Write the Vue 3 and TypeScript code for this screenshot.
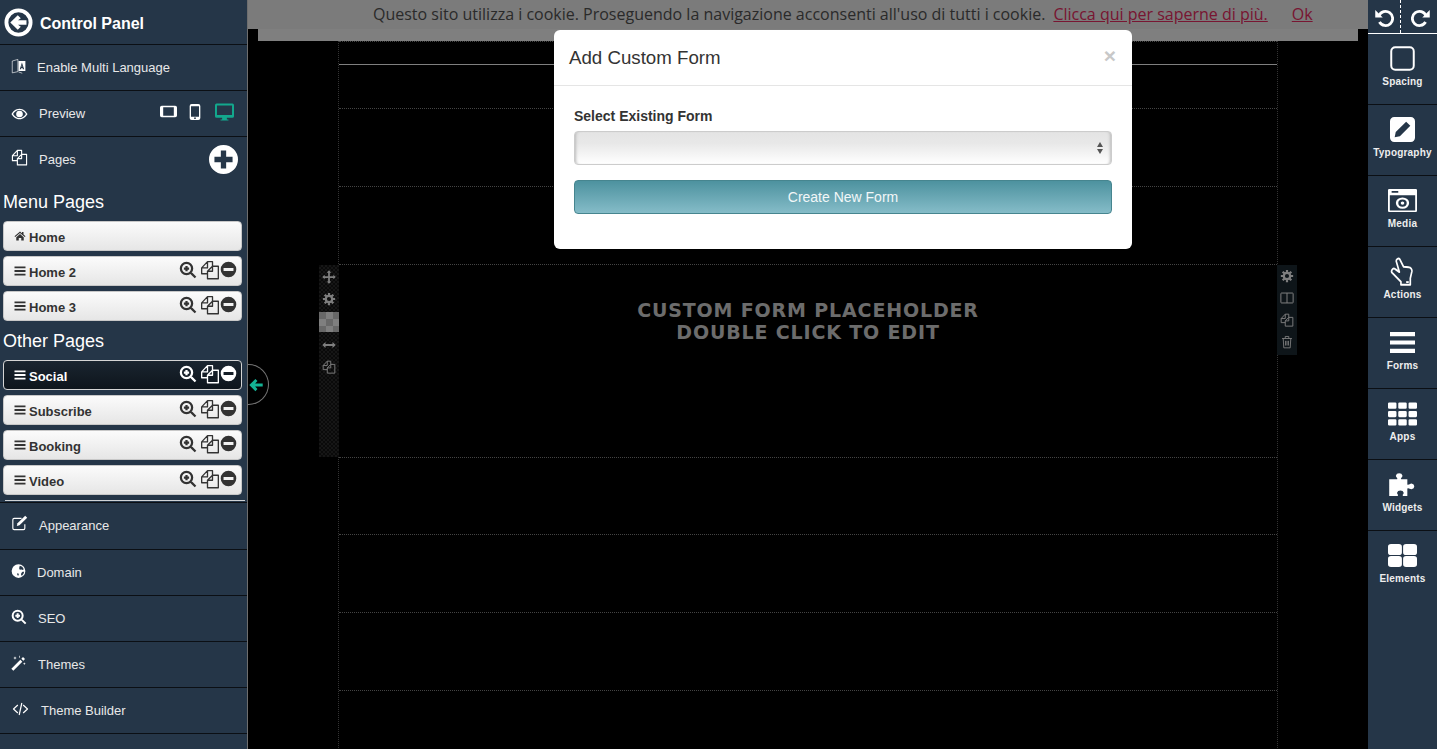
<script setup lang="ts">
import { h } from 'vue';

type IconDef = { d?: string; s?: string; sw?: number };

// rounded cell, used by the grid icons
const cell = (x: number, y: number, w: number, ht: number, r = 1) =>
  `M${x + r} ${y}h${w - 2 * r}a${r} ${r} 0 0 1 ${r} ${r}v${ht - 2 * r}a${r} ${r} 0 0 1-${r} ${r}h-${w - 2 * r}a${r} ${r} 0 0 1-${r}-${r}v-${ht - 2 * r}a${r} ${r} 0 0 1 ${r}-${r}z`;

const appCells = [1.5, 9.5, 17.5]
  .flatMap((y) => [0, 8.500, 17].map((x) => cell(x, y, 7, 6)))
  .join('');
const elementCells = [1, 12.500]
  .flatMap((y) => [0, 12.500].map((x) => cell(x, y, 11.500, 10.500, 2.500)))
  .join('');

const icons: Record<string, IconDef> = {
  back: {
    s: 'M12 2a10 10 0 1 0 0 20a10 10 0 0 0 0-20z',
    sw: 3.2,
    d: 'M5.2 12 11.4 5.9 13.9 8.4 11.6 10.2H18.6V13.8H11.6L13.9 15.6 11.4 18.1z',
  },
  language: {
    s: 'M2 4 11 1.5V21L2 23zM12 21.5 18 23.5',
    sw: 1,
    d: 'M12 4H23V20H12zM17.5 6.5 14 17H16L16.7 15H18.3L19 17H21zM17.5 10 18 13H17z',
  },
  eye: {
    d: 'M12 4C6 4 2 8.5 0 12c2 3.5 6 8 12 8s10-4.5 12-8c-2-3.5-6-8-12-8zM12 6C7.5 6 4.3 9 2.4 12 4.3 15 7.5 18 12 18s7.7-3 9.6-6C19.700 9 16.500 6 12 6zM12 7a5 5 0 1 0 0 10 5 5 0 0 0 0-10z',
  },
  tablet: {
    d: 'M2.500 4h19A2.500 2.500 0 0 1 24 6.500v11a2.500 2.500 0 0 1-2.500 2.500h-19A2.500 2.500 0 0 1 0 17.500v-11A2.500 2.500 0 0 1 2.500 4zM4.500 6v12h15V6z',
  },
  phone: {
    d: 'M7 0h10a3 3 0 0 1 3 3v18a3 3 0 0 1-3 3H7a3 3 0 0 1-3-3V3a3 3 0 0 1 3-3zM6 3.500v15.500h12V3.500zM12 20a1.300 1.300 0 1 0 0 2.600 1.300 1.300 0 0 0 0-2.600z',
  },
  desktop: {
    d: 'M2 2h20a2 2 0 0 1 2 2v14a2 2 0 0 1-2 2H2a2 2 0 0 1-2-2V4a2 2 0 0 1 2-2zM2.500 4.500v12h19v-12zM9 20h6v2h2v1.500H7V22h2z',
  },
  copy: {
    s: 'M9 16.500H2V9.500L9 2H15V7.500M9 2V9.500H2M15 7.500H22V22.500H9V13.500L15 7.500V13.500H9',
    sw: 1.6,
  },
  plusCircle: {
    d: 'M12 0a12 12 0 1 0 0 24 12 12 0 0 0 0-24zM9.800 4.500h4.400v5.300h5.300v4.400h-5.300v5.300H9.800v-5.300H4.500V9.800h5.300z',
  },
  minusCircle: {
    d: 'M12 1a11 11 0 1 0 0 22 11 11 0 0 0 0-22zM5 10h14v4H5z',
  },
  search: {
    s: 'M10 2.500a7.500 7.500 0 1 0 0 15 7.500 7.500 0 0 0 0-15zM15.500 15.500 22 22M10 6.500v7M6.500 10h7',
    sw: 3,
  },
  bars: { d: 'M1 3h22v3.600H1zM1 10.200h22v3.600H1zM1 17.400h22v3.600H1z' },
  home: {
    d: 'M12 3 1 12.500 2.500 14 12 6l9.500 8L23 12.500 19 9V4h-3v2.500zM4.500 14.500 12 8l7.500 6.500V21h-5v-5h-5v5h-5z',
  },
  edit: {
    s: 'M20 14v6a2 2 0 0 1-2 2H4a2 2 0 0 1-2-2V7a2 2 0 0 1 2-2h11',
    sw: 1.700,
    d: 'M20.500 1 23.500 4 12 15.500 8 16.500 9 12.500z',
  },
  globe: {
    d: 'M12 1a11 11 0 1 0 0 22 11 11 0 0 0 0-22zM14 3.500l4 1.500 2.500 4-2 1.500-1.500-1-3 .5-1-2.500zM21 13l-1 3.500-2.500 3-1.500-1 .5-3.500 2-2zM10 15.500l2 .5 .5 2-1 1.500-1.500-1z',
  },
  wand: {
    d: 'M3.500 23.500 .5 20.500 14 7 17 10zM15.500 5.500 18 3 21 6 18.500 8.500zM6 2l.7 1.800L8.500 4.500 6.700 5.200 6 7 5.300 5.200 3.500 4.500 5.300 3.800zM20 11l.5 1.300L22 13l-1.500.7L20 15l-.5-1.300L18 13l1.500-.7zM12 1h1v3h-1z',
  },
  code: { s: 'M8 6 1.500 12 8 18M16 6 22.500 12 16 18M14 3 10 21', sw: 1.800 },
  undo: {
    s: 'M6 10.500A8.500 8.500 0 1 1 6.500 18',
    sw: 3.400,
    d: 'M1.500 3.500V12.500H10.500z',
  },
  redo: {
    s: 'M18 10.500A8.500 8.500 0 1 0 17.500 18',
    sw: 3.400,
    d: 'M22.500 3.500V12.500H13.500z',
  },
  square: { s: 'M5 1.200h14A3.800 3.800 0 0 1 22.800 5v14a3.800 3.800 0 0 1-3.800 3.800H5A3.800 3.800 0 0 1 1.200 19V5A3.800 3.800 0 0 1 5 1.200z', sw: 1.900 },
  pencil: {
    d: 'M4 0h16a4 4 0 0 1 4 4v16a4 4 0 0 1-4 4H4a4 4 0 0 1-4-4V4a4 4 0 0 1 4-4zM15.500 4.500 19.500 8.500 9.500 18.500 4.500 19.500 5.500 14.500z',
  },
  media: {
    d: 'M1 1h22a1 1 0 0 1 1 1v20a1 1 0 0 1-1 1H1a1 1 0 0 1-1-1V2a1 1 0 0 1 1-1zM1.500 7v14.500h21V7zM3 2.800h5.500v1.700H3zM12 9a5.500 5.500 0 1 0 0 11 5.500 5.500 0 0 0 0-11zM12 11a3.500 3.500 0 1 0 0 7 3.500 3.500 0 0 0 0-7zM12 13a1.500 1.500 0 1 0 0 3 1.500 1.500 0 0 0 0-3z',
  },
  hand: {
    s: 'M6 3.500a2 2 0 0 1 3.500-1.500L13 8l5 .5a3 3 0 0 1 3 3.500L19.500 17.500V23H10.500V20.500L2.500 13.500a2 2 0 0 1 2.500-3.500L9 12.500z',
    sw: 1.600,
    d: 'M15.500 20h2.500v1.500h-2.500z',
  },
  forms: { d: 'M0 2h24v4H0zM0 10h24v4H0zM0 18h24v4H0z' },
  apps: { d: appCells },
  puzzle: {
    d: 'M1 7h6.500c1-1-1-2-1-3.500a2.800 2.800 0 0 1 5.500 0C12 5 10 6 11 7h5v5c1 1 2-1 3.500-1a2.800 2.800 0 0 1 0 5.500C18 16.500 17 15 16 16v7h-3.500c-1-1 .5-1.500.5-3a2.800 2.800 0 0 0-5.500 0c0 1.500 1.500 2 .5 3H1z',
  },
  elements: { d: elementCells },
  move: {
    d: 'M12 .5l4 4h-2.500v6H19.500V8l4 4-4 4v-2.500H13.500v6H16l-4 4-4-4h2.500v-6H4.500V16l-4-4 4-4v2.500h6v-6H8z',
  },
  gear: {
    s: 'M12 1.500v4M12 18.500v4M1.500 12h4M18.500 12h4M4.600 4.600l2.800 2.800M16.600 16.600l2.800 2.800M4.600 19.400l2.800-2.800M16.600 7.400l2.800-2.800M12 6.500a5.500 5.500 0 1 0 0 11 5.500 5.500 0 0 0 0-11z',
    sw: 3.800,
  },
  arrowsH: { d: 'M.5 12l5.500-5v3.300h12V7l5.500 5-5.500 5v-3.300H6V17z' },
  columns: { s: 'M2.500 3.500h19a1 1 0 0 1 1 1v15a1 1 0 0 1-1 1h-19a1 1 0 0 1-1-1v-15a1 1 0 0 1 1-1zM12 3.500v17', sw: 1.700 },
  trash: { s: 'M3.500 6h17M9 6V2.500h6V6M5.500 6l1 16h11l1-16M9.500 10v8M12 10v8M14.500 10v8', sw: 1.500 },
  arrowLeft: { d: 'M.5 12 11 1.500 14.500 5 10.500 9.500H23.500v5H10.500L14.500 19 11 22.500z' },
};

// small svg helper so the template stays readable
const Icon = (props: { name: string }) => {
  const def = icons[props.name];
  const parts = [];
  if (def.d) parts.push(h('path', { d: def.d, fill: 'currentColor', 'fill-rule': 'evenodd' }));
  if (def.s) {
    parts.push(
      h('path', {
        d: def.s,
        fill: 'none',
        stroke: 'currentColor',
        'stroke-width': def.sw ?? 2,
        'stroke-linejoin': 'round',
      }),
    );
  }
  return h('svg', { viewBox: '0 0 24 24', 'aria-hidden': 'true' }, parts);
};
Icon.props = ['name'];

const menuPages = [
  { name: 'Home', locked: true },
  { name: 'Home 2' },
  { name: 'Home 3' },
];
const otherPages = [
  { name: 'Social', active: true },
  { name: 'Subscribe' },
  { name: 'Booking' },
  { name: 'Video' },
];
const bottomNav = [
  { label: 'Appearance', icon: 'edit', w: 17 },
  { label: 'Domain', icon: 'globe', w: 15 },
  { label: 'SEO', icon: 'search', w: 16 },
  { label: 'Themes', icon: 'wand', w: 16 },
  { label: 'Theme Builder', icon: 'code', w: 19 },
];
const tools = [
  { label: 'Spacing', icon: 'square' },
  { label: 'Typography', icon: 'pencil' },
  { label: 'Media', icon: 'media', wide: true },
  { label: 'Actions', icon: 'hand', tall: true },
  { label: 'Forms', icon: 'forms' },
  { label: 'Apps', icon: 'apps', wide: true },
  { label: 'Widgets', icon: 'puzzle', wide: true },
  { label: 'Elements', icon: 'elements', wide: true },
];
// row heights of the page being edited
const rows = [
  { h: 23 },
  { h: 44, solid: true },
  { h: 78 },
  { h: 78 },
  { h: 193, form: true },
  { h: 77 },
  { h: 78 },
  { h: 78 },
  { h: 100 },
];
</script>

<template>
  <div class="app">
    <aside class="sidebar">
      <header class="panel-head">
        <Icon name="back" class="back-icon" />
        <span>Control Panel</span>
      </header>
      <div class="nav-row">
        <Icon name="language" class="nav-icon lang" />
        <span>Enable Multi Language</span>
      </div>
      <div class="nav-row">
        <Icon name="eye" class="nav-icon eye" />
        <span>Preview</span>
        <div class="devices">
          <Icon name="tablet" class="dev-tablet" />
          <Icon name="phone" class="dev-phone" />
          <Icon name="desktop" class="dev-desktop" />
        </div>
      </div>
      <div class="nav-row no-line">
        <Icon name="copy" class="nav-icon pages-icon" />
        <span>Pages</span>
        <Icon name="plusCircle" class="add-page" />
      </div>

      <section class="pages">
        <h3>Menu Pages</h3>
        <div v-for="p in menuPages" :key="p.name" class="page-btn">
          <Icon :name="p.locked ? 'home' : 'bars'" class="page-lead" />
          <span class="page-name">{{ p.name }}</span>
          <div v-if="!p.locked" class="page-actions">
            <Icon name="search" class="act-search" />
            <Icon name="copy" class="act-copy" />
            <Icon name="minusCircle" class="act-minus" />
          </div>
        </div>
        <h3 class="second">Other Pages</h3>
        <div v-for="p in otherPages" :key="p.name" class="page-btn" :class="{ active: p.active }">
          <Icon name="bars" class="page-lead" />
          <span class="page-name">{{ p.name }}</span>
          <div class="page-actions">
            <Icon name="search" class="act-search" />
            <Icon name="copy" class="act-copy" />
            <Icon name="minusCircle" class="act-minus" />
          </div>
        </div>
        <div class="pages-end"></div>
      </section>

      <div v-for="n in bottomNav" :key="n.label" class="nav-row bottom">
        <Icon :name="n.icon" class="nav-icon" :style="{ width: n.w + 'px' }" />
        <span>{{ n.label }}</span>
      </div>
    </aside>

    <main class="stage">
      <div class="cookie">
        <span>Questo sito utilizza i cookie. Proseguendo la navigazione acconsenti all'uso di tutti i cookie.</span>
        <a class="more">Clicca qui per saperne di più.</a>
        <a class="ok">Ok</a>
      </div>
      <div class="page-strip"></div>
      <div class="canvas">
        <div
          v-for="(r, i) in rows"
          :key="i"
          class="row"
          :class="{ solid: r.solid }"
          :style="{ height: r.h + 'px' }"
        >
          <template v-if="r.form">
            <div class="row-tools left">
              <Icon name="move" />
              <Icon name="gear" />
              <div class="checker"></div>
              <Icon name="arrowsH" />
              <Icon name="copy" />
            </div>
            <div class="row-tools right">
              <Icon name="gear" />
              <Icon name="columns" />
              <Icon name="copy" />
              <Icon name="trash" />
            </div>
            <p class="placeholder">CUSTOM FORM PLACEHOLDER<br />DOUBLE CLICK TO EDIT</p>
          </template>
        </div>
      </div>

      <div class="backdrop"></div>

      <div class="tab">
        <Icon name="arrowLeft" />
      </div>

      <div class="modal">
        <div class="modal-head">
          <h4>Add Custom Form</h4>
          <span class="close">×</span>
        </div>
        <div class="modal-body">
          <label for="existing">Select Existing Form</label>
          <div class="select-wrap">
            <select id="existing"></select>
            <span class="spin"></span>
          </div>
          <button type="button" class="create">Create New Form</button>
        </div>
      </div>
    </main>

    <aside class="toolbar">
      <div class="history">
        <Icon name="undo" />
        <Icon name="redo" />
      </div>
      <div v-for="t in tools" :key="t.label" class="tool">
        <Icon
          :name="t.icon"
          class="tool-icon"
          :class="{ wide: t.wide, tall: t.tall }"
          preserveAspectRatio="none"
        />
        <span>{{ t.label }}</span>
      </div>
    </aside>
  </div>
</template>

<style>
html,
body {
  margin: 0;
  background: #000;
  overflow: hidden;
}
</style>

<style scoped>
.app {
  display: flex;
  height: 749px;
  overflow: hidden;
  font-family: "Liberation Sans", Arial, sans-serif;
}

svg {
  display: block;
  flex: none;
}

.sidebar {
  width: 247px;
  flex: none;
  background: #253648;
  border-right: 1px solid #6e6e6e;
  color: #fff;
}

.panel-head {
  display: flex;
  align-items: center;
  gap: 7px;
  height: 44px;
  padding-left: 4px;
  border-bottom: 1px solid #0b0f14;
  font-size: 16px;
  font-weight: 700;
}

.panel-head span {
  padding-top: 3px;
}

.nav-row {
  display: flex;
  align-items: center;
  gap: 11px;
  height: 45px;
  padding-left: 11px;
  border-bottom: 1px solid #0b0f14;
  font-size: 13px;
  color: #e8e8e8;
}

.nav-row.no-line {
  border-bottom: 0;
}

/* first row under the page list is a pixel taller */
.pages + .nav-row {
  height: 44px;
  padding-bottom: 2px;
}

.back-icon {
  width: 29px;
  height: 29px;
}

.nav-icon {
  width: 16px;
  height: 16px;
  margin-bottom: 4px;
  color: #fff;
}

.nav-icon.lang {
  width: 15px;
}

.nav-icon.eye {
  width: 17px;
  margin-bottom: 0;
}

.nav-icon.pages-icon {
  width: 17px;
  height: 17px;
}

.devices {
  display: flex;
  align-items: center;
  margin-left: auto;
  margin-right: 13px;
  margin-bottom: 4px;
}

.dev-tablet {
  width: 17px;
  height: 17px;
  color: #fff;
}

.dev-phone {
  width: 16px;
  height: 16px;
  margin-left: 10px;
  color: #fff;
}

.dev-desktop {
  width: 19px;
  height: 19px;
  margin-left: 12px;
  color: #13a88d;
}

.add-page {
  width: 29px;
  height: 29px;
  margin-left: auto;
  margin-right: 9px;
  color: #fff;
}

.pages {
  padding: 10px 5px 0 3px;
  border-bottom: 1px solid #0b0f14;
}

.pages h3 {
  margin: 0 0 9px;
  font-size: 18px;
  line-height: 20px;
  font-weight: 400;
  color: #fff;
}

.pages h3.second {
  margin-top: 10px;
}

.page-btn {
  display: flex;
  align-items: center;
  gap: 3px;
  box-sizing: border-box;
  height: 30px;
  margin-bottom: 5px;
  padding: 0 4px 0 10px;
  border: 1px solid #c8c8c8;
  border-radius: 4px;
  background: linear-gradient(#fbfbfb, #e6e6e6);
  font-size: 13px;
  font-weight: 700;
  color: #333;
}

.page-name {
  padding-top: 2px;
}

.page-btn.active {
  border-color: #d5d5d5;
  background: linear-gradient(#1a2530, #0e151c);
  color: #fff;
}

.page-lead {
  width: 12px;
  height: 12px;
}

.page-actions {
  display: flex;
  align-items: center;
  margin-left: auto;
  margin-top: -3px;
}

.act-search {
  width: 18px;
  height: 18px;
}

.act-copy {
  width: 20px;
  height: 20px;
  margin-left: 3px;
}

.act-minus {
  width: 17px;
  height: 17px;
  margin-left: 0;
}

.pages-end {
  height: 1px;
  margin: 5px -3px 1px 2px;
  background: #cfd3d6;
}

.stage {
  position: relative;
  flex: 1;
  min-width: 0;
  overflow: hidden;
  background: #000;
}

.cookie {
  display: flex;
  align-items: center;
  gap: 8px;
  box-sizing: border-box;
  height: 29px;
  padding: 0 0 2px 125px;
  background: #f6f6f6;
  font-family: "Open Sans", "Noto Sans", sans-serif;
  font-size: 16px;
  color: #555;
  white-space: nowrap;
}

.cookie a {
  color: #f02c64;
  text-decoration: underline;
}

.cookie .ok {
  margin-left: 16px;
}

.page-strip {
  height: 12px;
  margin: 0 10px;
  background: #fff;
}

.canvas {
  box-sizing: border-box;
  width: 940px;
  margin: 0 auto;
  border-left: 1px dotted #666;
  border-right: 1px dotted #666;
}

.row {
  position: relative;
  box-sizing: border-box;
  border-top: 1px dotted #888;
}

.row.solid {
  border-top: 1px solid #fff;
}

.row-tools {
  position: absolute;
  top: 0;
  display: flex;
  flex-direction: column;
  align-items: center;
  width: 20px;
  color: #fff;
}

.row-tools svg {
  width: 14px;
  height: 14px;
}

.row-tools.left {
  left: -20px;
  height: 192px;
  gap: 8px;
  padding-top: 5px;
  box-sizing: border-box;
  background: repeating-conic-gradient(#2c2c2c 0 25%, #141414 0 50%) 0 0 / 4px 4px;
}

.row-tools.right {
  right: -20px;
  height: 90px;
  gap: 8px;
  padding-top: 4px;
  box-sizing: border-box;
  background: #1d2a33;
}

.checker {
  width: 20px;
  height: 20px;
  margin: -2px 0;
  background: repeating-conic-gradient(#fff 0 25%, #d0d0d0 0 50%) 0 0 / 14px 14px;
}

.placeholder {
  margin: 34px 0 0;
  text-align: center;
  font-family: "DejaVu Sans", "Liberation Sans", sans-serif;
  font-size: 19px;
  line-height: 22px;
  font-weight: 700;
  letter-spacing: 0.85px;
  color: #d8d8d8;
}

.backdrop {
  position: absolute;
  inset: 0;
  background: rgba(0, 0, 0, 0.5);
}

.tab {
  position: absolute;
  left: 0;
  top: 364px;
  box-sizing: border-box;
  width: 21px;
  height: 41px;
  display: flex;
  align-items: center;
  padding-left: 1px;
  border: 1px solid #777;
  border-left: 0;
  border-radius: 0 21px 21px 0;
  background: #000;
  color: #13b394;
}

.tab svg {
  width: 14px;
  height: 14px;
}

.modal {
  position: absolute;
  left: 306px;
  top: 30px;
  width: 578px;
  height: 219px;
  border-radius: 6px;
  background: #fff;
  color: #333;
}

.modal-head {
  display: flex;
  align-items: center;
  justify-content: space-between;
  box-sizing: border-box;
  height: 56px;
  padding: 0 16px 0 15px;
  border-bottom: 1px solid #e5e5e5;
}

.modal-head h4 {
  margin: 0;
  font-size: 18.7px;
  font-weight: 400;
}

.close {
  margin-top: -4px;
  font-size: 21px;
  font-weight: 700;
  color: #c8c8c8;
}

.modal-body {
  display: flex;
  flex-direction: column;
  padding: 22px 20px 0;
}

label {
  font-size: 14px;
  line-height: 16px;
  font-weight: 700;
  margin-bottom: 7px;
}

.select-wrap {
  position: relative;
  height: 34px;
  margin-bottom: 15px;
}

select {
  display: block;
  width: 100%;
  height: 100%;
  appearance: none;
  border: 1px solid #ccc;
  border-radius: 4px;
  background: linear-gradient(#e4e4e4, #e8e8e8 35%, #fff);
  box-shadow: inset 3px 0 3px -2px #bbb, inset -3px 0 3px -2px #bbb;
}

.spin {
  position: absolute;
  right: 9px;
  top: 11px;
  width: 0;
  height: 0;
  border-left: 3px solid transparent;
  border-right: 3px solid transparent;
  border-bottom: 5px solid #555;
}

.spin::after {
  content: "";
  position: absolute;
  left: -3px;
  top: 7px;
  border-left: 3px solid transparent;
  border-right: 3px solid transparent;
  border-top: 5px solid #555;
}

.create {
  height: 34px;
  border: 1px solid #46858f;
  border-radius: 4px;
  background: linear-gradient(#4d929f, #85bcc8);
  color: #f2f7f8;
  font-family: inherit;
  font-size: 14px;
  padding: 0;
}

.toolbar {
  width: 69px;
  flex: none;
  background: #253648;
  color: #fff;
}

.history {
  position: relative;
  display: flex;
  justify-content: space-between;
  align-items: center;
  box-sizing: border-box;
  height: 34px;
  padding: 0 6px;
  border-bottom: 1px solid #fff;
}

.history svg {
  width: 20px;
  height: 20px;
}

.history::after {
  content: "";
  position: absolute;
  left: 32px;
  top: 0;
  bottom: 0;
  border-left: 1px dashed #fff;
}

.tool {
  display: flex;
  flex-direction: column;
  align-items: center;
  box-sizing: border-box;
  height: 71px;
  padding-top: 12px;
  border-bottom: 1px solid #0b0f14;
  font-size: 10px;
  font-weight: 700;
  letter-spacing: 0.2px;
  color: #eee;
}

.tool:last-child {
  border-bottom: 0;
}

.tool-icon {
  width: 25px;
  height: 25px;
  margin-bottom: 5px;
  color: #fff;
}

.tool-icon.wide {
  width: 29px;
}

.tool-icon.tall {
  height: 29px;
  margin-top: -2px;
  margin-bottom: 3px;
}
</style>
